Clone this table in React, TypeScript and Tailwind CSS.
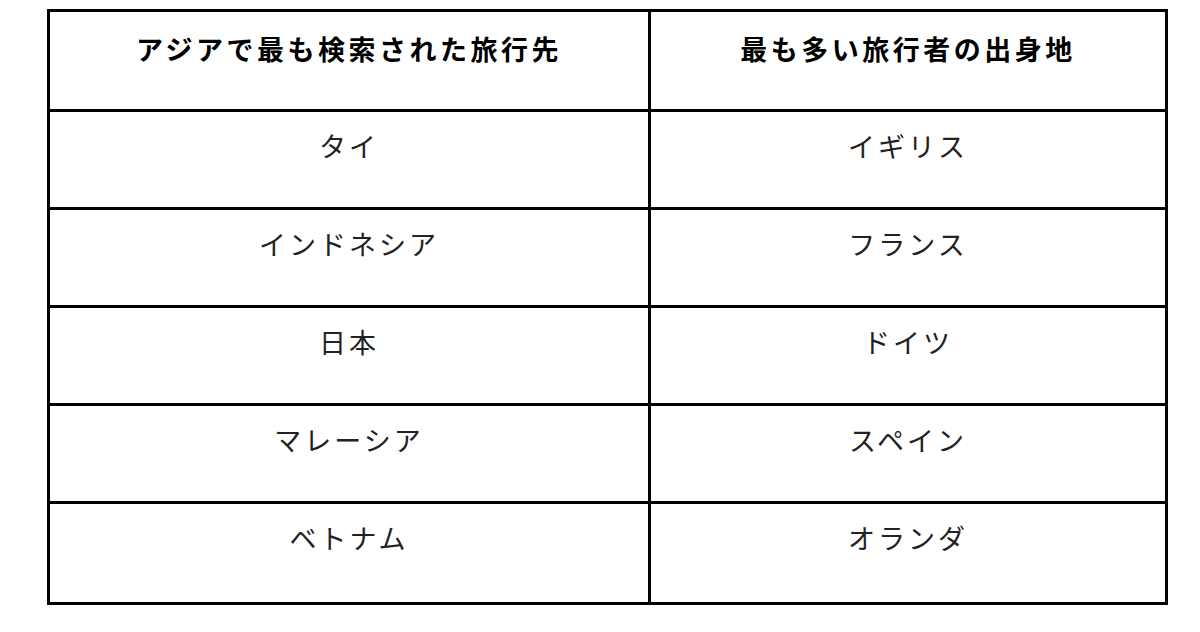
const rows: [string, string][] = [
  ['タイ', 'イギリス'],
  ['インドネシア', 'フランス'],
  ['日本', 'ドイツ'],
  ['マレーシア', 'スペイン'],
  ['ベトナム', 'オランダ'],
];

export default function App() {
  return (
    <div
      className="w-[1200px] h-[632px] bg-white pt-[9px] pl-[47px]"
      style={{ fontFamily: '"Noto Sans CJK JP", "Noto Sans", sans-serif' }}
    >
      <div className="w-[1121px] border-[3px] border-black">
        <div className="flex h-[100px] border-b-[3px] border-black text-[27px] leading-[36px] font-bold text-black tracking-[3.5px]">
          <div className="w-[601px] border-r-[3px] border-black pt-[19px] text-center">
            アジアで最も検索された旅行先
          </div>
          <div className="flex-1 pt-[19px] text-center">最も多い旅行者の出身地</div>
        </div>
        {rows.map(([dest, origin], i) => (
          <div
            key={dest}
            className={`flex h-[98px] text-[27px] leading-[36px] text-[#222] tracking-[3px] ${
              i < rows.length - 1 ? 'border-b-[3px] border-black' : 'h-[95px]'
            }`}
          >
            <div className="w-[601px] border-r-[3px] border-black pt-[16px] text-center">{dest}</div>
            <div className="flex-1 pt-[16px] text-center">{origin}</div>
          </div>
        ))}
      </div>
    </div>
  );
}
